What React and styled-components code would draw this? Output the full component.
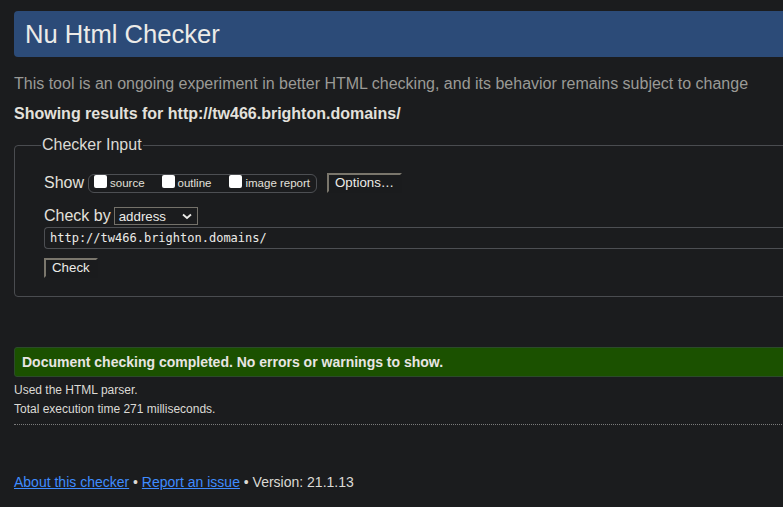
import React from "react";
import styled, { createGlobalStyle } from "styled-components";

const Global = createGlobalStyle`
  html, body { margin: 0; padding: 0; background: #1b1c1e; overflow: hidden; }
  body { font-family: "Liberation Sans", Arial, sans-serif; color: #e3e1dc; }
`;

const Page = styled.div`
  width: 1000px;
  padding: 11px 14px 0 14px;
  box-sizing: border-box;
`;

const Header = styled.h1`
  margin: 0;
  background: #2c4b78;
  border-radius: 4px;
  height: 46px;
  display: flex;
  align-items: center;
  padding: 0 11px;
  font-size: 25.6px;
  font-weight: normal;
  color: #ecebe8;
`;

const Lead = styled.p`
  margin: 17px 0 0 0;
  font-size: 16px;
  line-height: 20px;
  color: #9a9a96;
`;

const Results = styled.p`
  margin: 10px 0 0 0;
  font-size: 16px;
  line-height: 20px;
  font-weight: bold;
  color: #e3e1dc;
`;

const Fieldset = styled.fieldset`
  margin: 12px 0 0 0;
  padding: 19px 0 18px 29px;
  border: 1px solid #4a4c50;
  border-radius: 4px;
  min-width: 0;
`;

const Legend = styled.legend`
  margin-left: -3px;
  padding: 0 1px;
  font-size: 16px;
  color: #dcdad5;
`;

const Row = styled.div`
  display: flex;
  align-items: center;
  margin-top: ${(p) => p.$mt || 0}px;
`;

const Label = styled.span`
  font-size: 16px;
  color: #e3e1dc;
`;

const OptionsBox = styled.span`
  display: inline-flex;
  align-items: center;
  height: 17px;
  border: 1px solid #4d4f53;
  border-radius: 6px;
  padding: 0 6px 0 5px;
  margin-left: 4px;
`;

const CheckItem = styled.label`
  display: inline-flex;
  align-items: center;
  font-size: 11.5px;
  color: #e3e1dc;
  margin-right: ${(p) => p.$mr || 0}px;
`;

const Box = styled.span`
  display: inline-block;
  width: 13px;
  height: 13px;
  background: #fff;
  border-radius: 2px;
  margin-right: 3px;
  margin-top: -3px;
`;

const Button = styled.button`
  font-family: "Liberation Sans", Arial, sans-serif;
  font-size: 13.3px;
  color: #ecebe8;
  background: #1a1b1d;
  border: 2px solid;
  border-color: #7a766c #1a1b1d #1a1b1d #7a766c;
  height: 20px;
  padding: 0 6px;
  margin-left: ${(p) => p.$ml || 0}px;
  line-height: 16px;
`;

const Select = styled.div`
  display: inline-flex;
  align-items: center;
  justify-content: space-between;
  box-sizing: border-box;
  width: 84px;
  height: 18px;
  border: 1px solid #74716a;
  background: #1b1c1e;
  font-size: 13.3px;
  color: #ecebe8;
  padding: 0 5px 0 4px;
  margin-left: 3px;
`;

const UrlInput = styled.div`
  margin-top: 2px;
  height: 22px;
  box-sizing: border-box;
  border: 1px solid #4d4f53;
  border-right: none;
  border-radius: 4px 0 0 4px;
  display: flex;
  align-items: center;
  padding-left: 5px;
  font-family: "DejaVu Sans Mono", "Liberation Mono", monospace;
  font-size: 12px;
  color: #ecebe8;
`;

const Success = styled.div`
  margin-top: 50px;
  height: 30px;
  box-sizing: border-box;
  background: #1b5100;
  border: 1px solid #2c4b2a;
  border-radius: 3px;
  display: flex;
  align-items: center;
  padding-left: 7px;
  font-size: 14px;
  font-weight: bold;
  color: #e8e6e3;
`;

const Small = styled.p`
  margin: ${(p) => p.$mt}px 0 0 0;
  font-size: 12px;
  line-height: 14px;
  color: #dcdad5;
`;

const Divider = styled.hr`
  margin: 8px 0 0 0;
  border: none;
  border-top: 1px dotted #7a7a7a;
`;

const Footer = styled.p`
  margin: 49px 0 0 0;
  font-size: 14px;
  color: #dcdad5;
`;

const Link = styled.a`
  color: #3f8cff;
  text-decoration: underline;
`;

const Chevron = () => (
  <svg width="10" height="7" viewBox="0 0 10 7">
    <path d="M1 1.5 L5 5 L9 1.5" fill="none" stroke="#ecebe8" strokeWidth="1.8" />
  </svg>
);

export default function App() {
  return (
    <>
      <Global />
      <Page>
        <Header>Nu Html Checker</Header>
        <Lead>
          This tool is an ongoing experiment in better HTML checking, and its behavior remains subject to change
        </Lead>
        <Results>Showing results for http://tw466.brighton.domains/</Results>
        <Fieldset>
          <Legend>Checker Input</Legend>
          <Row>
            <Label>Show</Label>
            <OptionsBox>
              <CheckItem $mr={17}>
                <Box />source
              </CheckItem>
              <CheckItem $mr={18}>
                <Box />outline
              </CheckItem>
              <CheckItem>
                <Box />image report
              </CheckItem>
            </OptionsBox>
            <Button $ml={10}>Options…</Button>
          </Row>
          <Row $mt={14}>
            <Label>Check by</Label>
            <Select>
              address
              <Chevron />
            </Select>
          </Row>
          <UrlInput>http://tw466.brighton.domains/</UrlInput>
          <Row $mt={9}>
            <Button>Check</Button>
          </Row>
        </Fieldset>
        <Success>Document checking completed. No errors or warnings to show.</Success>
        <Small $mt={6}>Used the HTML parser.</Small>
        <Small $mt={5}>Total execution time 271 milliseconds.</Small>
        <Divider />
        <Footer>
          <Link href="#">About this checker</Link> • <Link href="#">Report an issue</Link> • Version: 21.1.13
        </Footer>
      </Page>
    </>
  );
}
